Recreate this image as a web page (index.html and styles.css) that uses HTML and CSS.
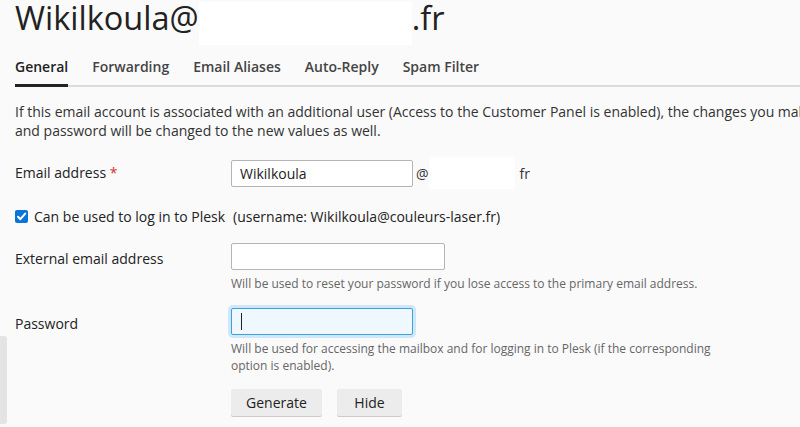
FILE: index.html
```html
<!DOCTYPE html>
<html>
<head>
<meta charset="utf-8">
<link rel="stylesheet" href="styles.css">
</head>
<body>
<div class="page">
  <h1 class="title">Wikilkoula@<span class="mask mask-title"></span>.fr</h1>
  <nav class="tabs">
    <span class="tab active">General</span>
    <span class="tab">Forwarding</span>
    <span class="tab">Email Aliases</span>
    <span class="tab">Auto-Reply</span>
    <span class="tab">Spam Filter</span>
  </nav>
  <p class="intro">If this email account is associated with an additional user (Access to the Customer Panel is enabled), the changes you make to the email address<br>and password will be changed to the new values as well.</p>

  <div class="row row-email">
    <label class="label">Email address <span class="req">*</span></label>
    <div class="field inline">
      <input class="input w182" type="text" value="Wikilkoula">
      <span class="at">@</span><span class="mask mask-domain"></span><span class="fr">fr</span>
    </div>
  </div>

  <div class="check-row">
    <span class="checkbox"><svg width="13" height="13" viewBox="0 0 13 13"><path d="M3 6.8 L5.4 9.2 L10.2 3.6" fill="none" stroke="#fff" stroke-width="2" stroke-linecap="round" stroke-linejoin="round"/></svg></span>
    <span class="check-text">Can be used to log in to Plesk</span>
    <span class="check-user">(username: Wikilkoula@couleurs-laser.fr)</span>
  </div>

  <div class="row row-ext">
    <label class="label">External email address</label>
    <div class="field">
      <input class="input w214" type="text" value="">
      <div class="hint">Will be used to reset your password if you lose access to the primary email address.</div>
    </div>
  </div>

  <div class="row row-pass">
    <label class="label">Password</label>
    <div class="field">
      <div class="input w182 focused"><span class="caret"></span></div>
      <div class="hint">Will be used for accessing the mailbox and for logging in to Plesk (if the corresponding option is enabled).</div>
      <div class="buttons">
        <button class="btn btn-gen">Generate</button>
        <button class="btn btn-hide">Hide</button>
      </div>
    </div>
  </div>
</div>
<div class="side-tab"></div>
</body>
</html>
```

FILE: styles.css
```css
html, body {
  margin: 0;
  padding: 0;
  background: #fafafa;
  overflow: hidden;
  height: 427px;
}
body {
  font-family: "Open Sans", "Liberation Sans", sans-serif;
  color: #222;
  font-size: 14px;
  position: relative;
}
.page {
  padding: 0 0 0 15px;
  width: 1000px;
}
.title {
  margin: 0;
  font-weight: 400;
  font-size: 32.5px;
  line-height: 36px;
  height: 46px;
  color: #222;
  display: flex;
  align-items: flex-start;
  white-space: nowrap;
}
.mask {
  display: inline-block;
  background: #fff;
}
.mask-title {
  width: 213px;
  height: 43px;
  margin-top: 2px;
}
.tabs {
  display: flex;
  gap: 24px;
  border-bottom: 2px solid #dcdcdc;
  margin-top: 8px;
  width: 785px;
}
.tab {
  font-size: 14px;
  font-weight: 600;
  color: #444;
  line-height: 20px;
  padding: 3px 0 7px;
  margin-bottom: -2px;
  border-bottom: 3px solid transparent;
}
.tab.active {
  color: #222;
  border-bottom-color: #222;
}
.intro {
  margin: 15px 0 0;
  font-size: 14px;
  line-height: 19px;
  color: #333;
  font-stretch: 89.5%;
  white-space: nowrap;
}
.row {
  display: flex;
}
.label {
  width: 216px;
  flex: none;
  font-size: 14px;
  color: #222;
  padding-top: 6px;
}
.req { color: #d0312d; }
.field.inline {
  display: flex;
  align-items: center;
}
.row-email { margin-top: 17px; }
.input {
  box-sizing: border-box;
  height: 27px;
  border: 1px solid #b5b5b5;
  border-radius: 2px;
  background: #fff;
  font-family: inherit;
  font-size: 14px;
  color: #222;
  padding: 0 8px;
  margin: 0;
  outline: none;
}
.w182 { width: 182px; }
.w214 { width: 214px; }
.at { margin-left: 3px; color: #333; }
.mask-domain { width: 86px; height: 32px; }
.fr { margin-left: 5px; color: #333; }
.check-row {
  display: flex;
  align-items: center;
  margin-top: 17px;
  height: 20px;
}
.checkbox {
  width: 13px;
  height: 13px;
  background: #0b74d9;
  border-radius: 2px;
  display: inline-flex;
}
.check-text { margin-left: 6px; }
.check-user { margin-left: 8px; }
.row-ext { margin-top: 17px; }
.hint {
  font-size: 12px;
  color: #666;
  line-height: 17px;
  margin-top: 5px;
  width: 500px;
}
.row-pass { margin-top: 16px; }
.input.focused {
  border-color: #3aa1dd;
  background: #f0f8ff;
  box-shadow: 0 0 0 3px #cfe7f7;
  display: flex;
  align-items: center;
  padding-left: 9px;
}
.caret {
  width: 1px;
  height: 17px;
  background: #222;
}
.row-pass .hint { width: 490px; }
.buttons {
  display: flex;
  gap: 15px;
  margin-top: 15px;
}
.btn {
  height: 27px;
  border: none;
  border-radius: 2px;
  background: #ececec;
  box-shadow: 0 1px 0 #ccc;
  font-family: inherit;
  font-size: 14px;
  color: #222;
  padding: 0;
}
.btn-gen { width: 91px; }
.btn-hide { width: 65px; }
.side-tab {
  position: absolute;
  left: 0;
  top: 336px;
  width: 7px;
  height: 88px;
  background: #e4e4e4;
  border-radius: 0 3px 3px 0;
}
```
